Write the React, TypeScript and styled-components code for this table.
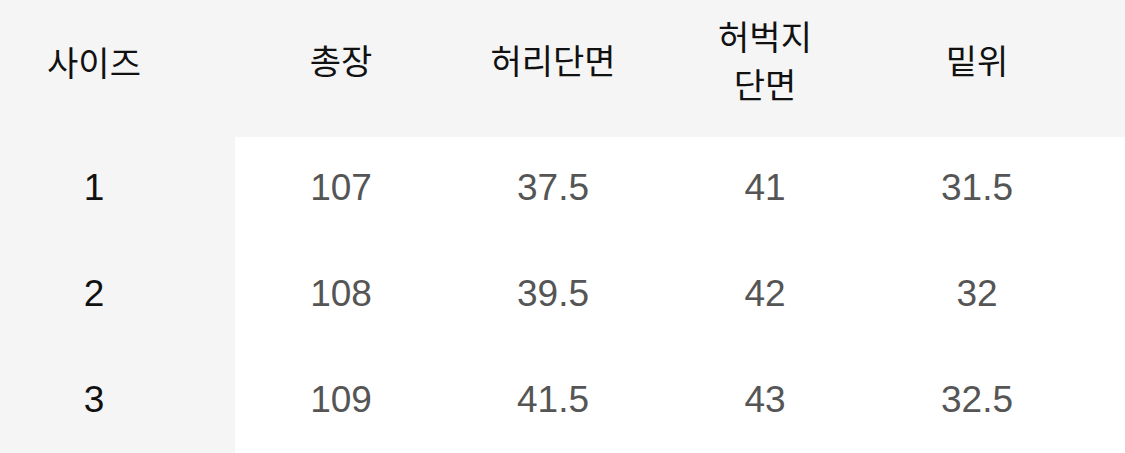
import React from "react";
import styled, { createGlobalStyle } from "styled-components";

const Global = createGlobalStyle`
  html, body { margin: 0; padding: 0; background: #ffffff; }
  body { font-family: "Liberation Sans", "Noto Sans CJK KR", sans-serif; }
`;

const Table = styled.div`
  width: 1125px;
  height: 453px;
  overflow: hidden;
  display: flex;
  flex-direction: column;
`;

const Row = styled.div<{ $head?: boolean }>`
  display: grid;
  grid-template-columns: 235px repeat(4, 212px) 1fr;
  height: ${(p) => (p.$head ? 137 : 106)}px;
  flex: none;
  background: ${(p) => (p.$head ? "#f5f5f5" : "#ffffff")};
`;

const LabelCell = styled.div<{ $head?: boolean }>`
  display: flex;
  align-items: center;
  justify-content: center;
  padding-right: 47px;
  padding-bottom: ${(p) => (p.$head ? 14 : 4)}px;
  background: #f5f5f5;
  color: #111111;
  font-size: ${(p) => (p.$head ? 34 : 37)}px;
`;

const HeadCell = styled.div`
  display: flex;
  align-items: center;
  justify-content: center;
  text-align: center;
  padding-bottom: 14px;
  color: #111111;
  font-size: 34px;
  line-height: 48px;
`;

const Cell = styled.div`
  display: flex;
  align-items: center;
  justify-content: center;
  padding-bottom: 4px;
  color: #555555;
  font-size: 37px;
`;

const Spacer = styled.div``;

const headers: React.ReactNode[] = [
  "총장",
  "허리단면",
  <>
    허벅지
    <br />
    단면
  </>,
  "밑위",
];

const rows = [
  { size: "1", values: ["107", "37.5", "41", "31.5"] },
  { size: "2", values: ["108", "39.5", "42", "32"] },
  { size: "3", values: ["109", "41.5", "43", "32.5"] },
];

export default function App() {
  return (
    <>
      <Global />
      <Table>
        <Row $head>
          <LabelCell $head>사이즈</LabelCell>
          {headers.map((h, i) => (
            <HeadCell key={i}>
              <span>{h}</span>
            </HeadCell>
          ))}
          <Spacer />
        </Row>
        {rows.map((r) => (
          <Row key={r.size}>
            <LabelCell>{r.size}</LabelCell>
            {r.values.map((v, i) => (
              <Cell key={i}>{v}</Cell>
            ))}
            <Spacer />
          </Row>
        ))}
      </Table>
    </>
  );
}
